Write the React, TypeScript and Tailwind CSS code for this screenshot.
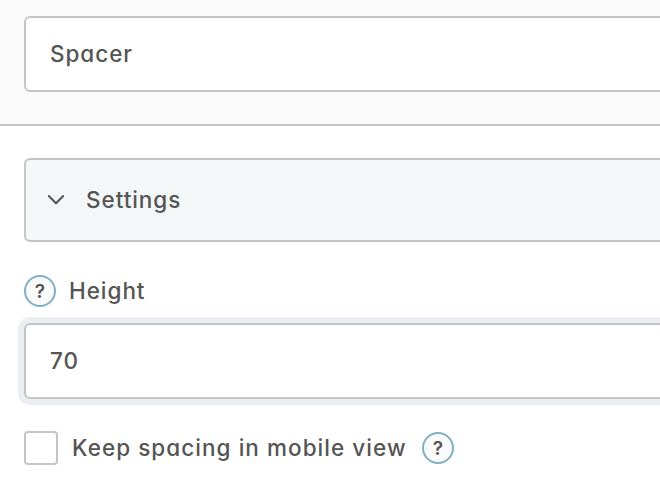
import clsx from 'clsx';

const HelpBadge = () => (
  <span className="flex h-8 w-8 shrink-0 items-center justify-center rounded-full border-2 border-[#80afc7] bg-[#fafafa] text-[19px] leading-none font-semibold tracking-normal">
    ?
  </span>
);

const Field = ({ value, focused }: { value: string; focused?: boolean }) => (
  <div
    className={clsx(
      'flex h-[76px] w-full items-center rounded-md border-2 border-[#c4c6c6] bg-white px-6',
      focused && 'shadow-[0_0_0_6px_#ebeef3]',
    )}
  >
    {value}
  </div>
);

export default function App() {
  return (
    <div className="h-[482px] w-full overflow-hidden bg-white font-['Inter',sans-serif] text-[22.5px] leading-8 font-medium text-[#555555] [font-feature-settings:'cv11']">
      <div className="w-[700px]">
        {/* Block name */}
        <header className="h-[126px] border-b-2 border-[#c4c6c6] bg-[#fafafa] pt-4 pl-6 tracking-[0.95px]">
          <Field value="Spacer" />
        </header>

        <section className="pt-8 pl-6 tracking-[0.95px]">
          {/* Accordion title */}
          <button className="flex h-[84px] w-full items-center rounded-md border-2 border-[#c4c6c6] bg-[#f3f7f8] pl-[22px]">
            <svg className="h-[10px] w-4" viewBox="0 0 16 10" fill="none" stroke="currentColor" strokeWidth="2" strokeLinecap="round" strokeLinejoin="miter">
              <path d="M.8 1L8 8.3 15.2 1" />
            </svg>
            <span className="ml-[22px]">Settings</span>
          </button>

          <div className="mt-[33px] flex h-8 items-center gap-[13px]">
            <HelpBadge />
            <span>Height</span>
          </div>

          <div className="mt-4">
            <Field value="70" focused />
          </div>

          <div className="mt-8 flex h-[34px] items-center">
            <span className="h-[34px] w-[34px] shrink-0 rounded border-2 border-[#c4c6c6] bg-white" />
            <span className="ml-[14px] mr-4 w-[334px] tracking-[1.05px] whitespace-nowrap">Keep spacing in mobile view</span>
            <HelpBadge />
          </div>
        </section>
      </div>
    </div>
  );
}
